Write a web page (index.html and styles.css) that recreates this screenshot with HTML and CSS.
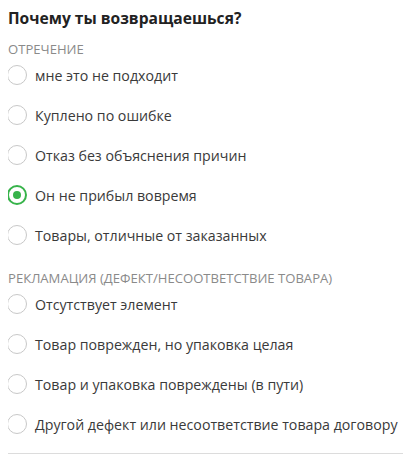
FILE: index.html
```html
<!DOCTYPE html>
<html lang="ru">

<head>
    <meta charset="UTF-8">
    <meta name="viewport" content="width=device-width, initial-scale=1.0">
    <title>Возврат</title>
    <link rel="stylesheet" href="styles.css">
</head>

<body>
    <form class="reasons">
        <h2 class="reasons-title">Почему ты возвращаешься?</h2>

        <!-- отказ -->
        <div class="group">
            <div class="group-label">Отречение</div>
            <label class="option"><input type="radio" name="reason"><span>мне это не подходит</span></label>
            <label class="option"><input type="radio" name="reason"><span>Куплено по ошибке</span></label>
            <label class="option"><input type="radio" name="reason"><span>Отказ без объяснения причин</span></label>
            <label class="option"><input type="radio" name="reason" checked><span>Он не прибыл вовремя</span></label>
            <label class="option"><input type="radio" name="reason"><span>Товары, отличные от заказанных</span></label>
        </div>

        <!-- рекламация -->
        <div class="group">
            <div class="group-label">Рекламация (дефект/несоответствие товара)</div>
            <label class="option"><input type="radio" name="reason"><span>Отсутствует элемент</span></label>
            <label class="option"><input type="radio" name="reason"><span>Товар поврежден, но упаковка целая</span></label>
            <label class="option"><input type="radio" name="reason"><span>Товар и упаковка повреждены (в пути)</span></label>
            <label class="option"><input type="radio" name="reason"><span>Другой дефект или несоответствие товара договору</span></label>
        </div>
    </form>
</body>

</html>
```

FILE: styles.css
```css
body {
    margin: 8px 2px 8px 8px;
    font-family: "Open Sans", "Liberation Sans", sans-serif;
    color: #333;
    background: #fff;
}

.reasons {
    border-bottom: 1px solid #dcdcdc;
    padding-bottom: 9px;
}

.reasons-title {
    margin: 0;
    font-size: 15.6px;
    line-height: 20px;
    font-weight: 700;
    color: #222;
}

.group-label {
    margin-top: 15px;
    font-size: 13.1px;
    line-height: 12px;
    color: #8a8a8a;
    text-transform: uppercase;
}

.group + .group .group-label {
    margin-top: 17px;
}

.option {
    display: flex;
    align-items: center;
    gap: 8px;
    height: 40px;
    font-size: 14.2px;
    color: #3a3a3a;
    cursor: pointer;
}

/* свой кружок вместо стандартного */
.option input {
    appearance: none;
    -webkit-appearance: none;
    flex: none;
    display: flex;
    align-items: center;
    justify-content: center;
    width: 20px;
    height: 20px;
    margin: 0 0 0 -1px;
    border: 1px solid #c8c8c8;
    border-radius: 50%;
    background: #fff;
    cursor: pointer;
}

.option input:checked {
    border: 2px solid #37b34a;
}

.option input:checked::before {
    content: '';
    width: 8px;
    height: 8px;
    border-radius: 50%;
    background: #37b34a;
}
```
